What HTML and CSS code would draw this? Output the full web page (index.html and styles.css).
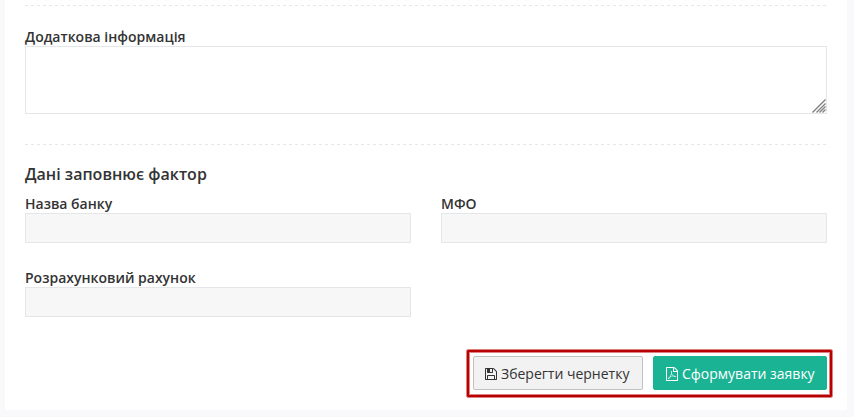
FILE: index.html
```html
<!DOCTYPE html>
<html lang="uk">
<head>
<meta charset="utf-8">
<title>Заявка</title>
<link rel="stylesheet" href="styles.css">
</head>
<body>
<form class="panel">
  <hr class="divider">
  <div class="field info">
    <label for="info">Додаткова інформація</label>
    <div class="area-wrap">
      <textarea id="info"></textarea>
      <svg class="grip" viewBox="0 0 14 14"><path d="M.5 13.500 13.500 .5M4.500 13.500 13.500 4.500M7.500 13.500 13.500 7.500M10.500 13.500 13.500 10.500"/></svg>
    </div>
  </div>
  <hr class="divider">
  <h3>Дані заповнює фактор</h3>
  <div class="grid">
    <div class="field"><label for="bank">Назва банку</label><input id="bank" disabled></div>
    <div class="field"><label for="mfo">МФО</label><input id="mfo" disabled></div>
    <div class="field"><label for="account">Розрахунковий рахунок</label><input id="account" disabled></div>
  </div>
  <div class="actions">
    <div class="highlight">
      <button type="button" class="btn draft"><svg class="icon" viewBox="0 0 1536 1792"><path d="M384 1536h768v-384h-768v384zM1280 1536h128v-896q0-14-10-38.500t-20-34.500l-281-281q-10-10-34-20t-39-10v416q0 40-28 68t-68 28h-576q-40 0-68-28t-28-68v-416h-128v1280h128v-416q0-40 28-68t68-28h832q40 0 68 28t28 68v416zM896 608v-320q0-13-9.500-22.500t-22.500-9.500h-192q-13 0-22.500 9.500t-9.500 22.500v320q0 13 9.500 22.500t22.500 9.500h192q13 0 22.500-9.500t9.500-22.500zM1536 640v928q0 40-28 68t-68 28h-1344q-40 0-68-28t-28-68v-1344q0-40 28-68t68-28h928q40 0 88 20t76 48l280 280q28 28 48 76t20 88z"/></svg><span>Зберегти чернетку</span></button>
      <button type="button" class="btn submit"><svg class="icon" viewBox="128 0 1536 1792"><path d="M1596 380q28 28 48 76t20 88v1152q0 40-28 68t-68 28h-1344q-40 0-68-28t-28-68v-1600q0-40 28-68t68-28h896q40 0 88 20t76 48zm-444-244v376h376q-10-29-22-41l-313-313q-12-12-41-22zm384 1528v-1024h-416q-40 0-68-28t-28-68v-416h-768v1536h1280zm-514-593q33 26 84 56 59-7 117-7 147 0 177 49 16 22 2 52 0 1-1 2l-2 2v1q-6 38-71 38-48 0-115-20t-130-53q-221 24-392 83-153 262-242 262-15 0-28-7l-24-12q-1-1-6-5-10-10-6-36 9-40 56-91.500t132-96.500q14-9 23 6 2 2 2 4 52-85 107-197 68-136 104-262-24-82-30.500-159.500t6.500-127.500q11-40 42-40h22q23 0 35 15 18 21 9 68-2 6-4 8 1 3 1 8v30q-2 123-14 192 55 164 146 238zm-576 411q52-24 137-158-51 40-87.500 84t-49.500 74zm398-920q-15 42-2 132 1-7 7-44 0-3 7-43 1-4 4-8-1-1-1-2-1-2-1-3-1-22-13-36 0 1-1 2v2zm-124 661q135-54 284-81-2-1-13-9.500t-16-13.500q-76-67-127-176-27 86-83 197-30 56-45 83zm646-16q-24-24-140-24 76 28 124 28 14 0 18-1 0-1-2-3z"/></svg><span>Сформувати заявку</span></button>
    </div>
  </div>
</form>
</body>
</html>
```
FILE: styles.css
```css
* { box-sizing: border-box; }
body {
  margin: 0;
  height: 417px;
  overflow: hidden;
  background: #f9f9fb;
  color: #333;
  font-family: "Open Sans", sans-serif;
  font-size: 14px;
}
.panel {
  height: 410px;
  margin: 0 7px 0 5px;
  padding: 5px 20px 0;
  background: #fff;
}
.divider {
  margin: 0;
  border: 0;
  height: 1px;
  background: repeating-linear-gradient(90deg, #e7e7e7 0 3px, transparent 3px 6px);
}
.field label {
  display: block;
  height: 18px;
  line-height: 18px;
  font-weight: 600;
}
.info { margin: 22px 0 30px; }
.area-wrap { position: relative; height: 68px; }
textarea {
  display: block;
  width: 100%;
  height: 68px;
  border: 1px solid #e5e6e7;
  background: #fff;
  resize: none;
}
.grip {
  position: absolute;
  right: 1px;
  bottom: 1px;
  width: 14px;
  height: 14px;
  fill: none;
  stroke: #808080;
  stroke-width: 1.4;
}
h3 {
  margin: 20px 0 0;
  height: 30px;
  line-height: 18px;
  font-size: 16px;
  font-weight: 600;
}
.grid {
  display: grid;
  grid-template-columns: 1fr 1fr;
  gap: 26px 30px;
}
.grid input {
  display: block;
  width: 100%;
  height: 30px;
  border: 1px solid #e5e6e7;
  background: #f7f7f7;
}
.actions {
  display: flex;
  justify-content: flex-end;
  margin: 32px -6px 0 0;
}
.highlight {
  display: flex;
  gap: 10px;
  padding: 6px 5px 7px 6px;
  border: 1px solid #dc8080;
  border-radius: 2px;
  box-shadow: inset 0 0 0 2px #b80000, inset 0 0 0 3px #dc8080;
}
.btn {
  display: flex;
  align-items: center;
  gap: 4px;
  height: 34px;
  padding: 1px 0 0 11px;
  border: 1px solid #c2c2c2;
  border-radius: 2px;
  background: #f2f2f2;
  color: #333;
  font: 14px/20px "Open Sans", sans-serif;
  white-space: nowrap;
}
.draft { width: 170px; }
.submit { width: 174px; padding-left: 12px; border-color: #1ab394; background: #1ab394; color: #fff; }
.icon { width: 12px; height: 14px; fill: currentColor; }
```
